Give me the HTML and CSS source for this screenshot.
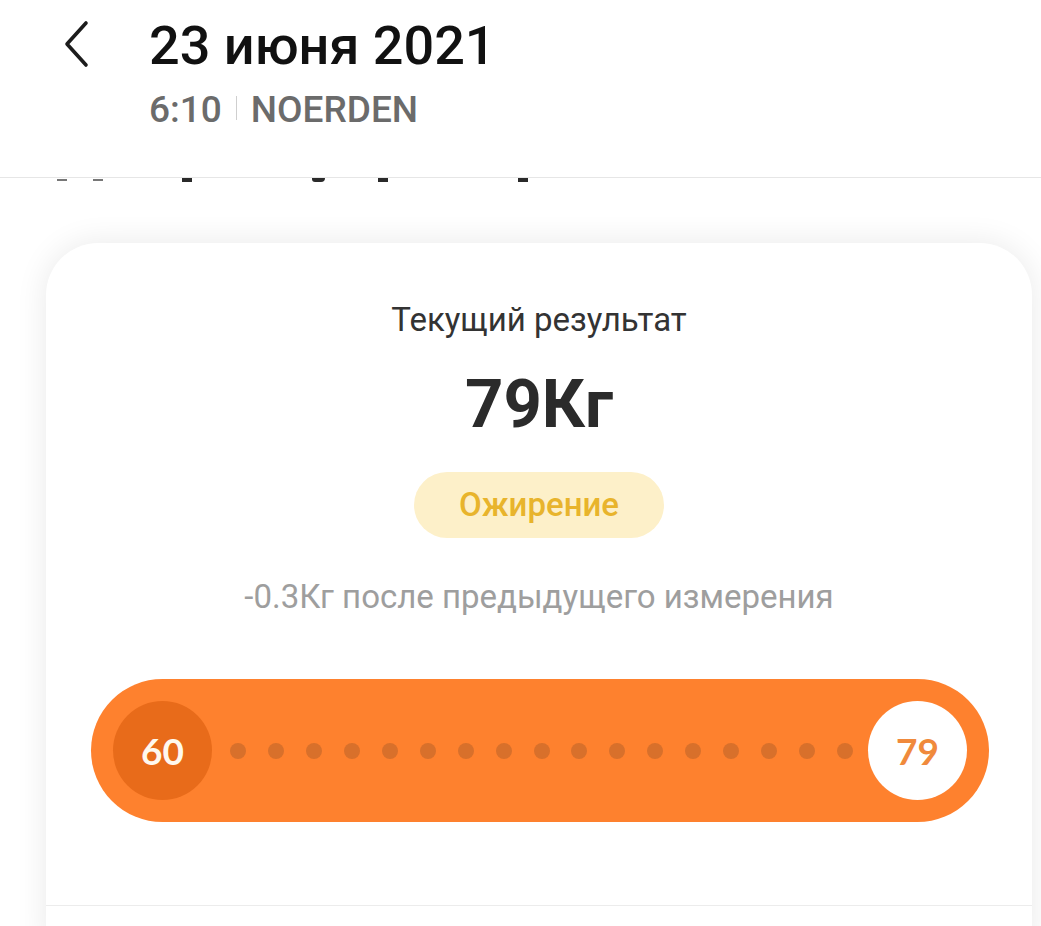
FILE: index.html
```html
<!DOCTYPE html>
<html lang="ru">
<head>
    <meta charset="UTF-8">
    <meta name="viewport" content="width=device-width, initial-scale=1.0">
    <title>23 июня 2021</title>
    <link rel="stylesheet" href="styles.css">
</head>
<body>
    <header class="top-bar">
        <button class="back-btn" aria-label="Назад">
            <svg width="26" height="48" viewBox="0 0 26 48">
                <path d="M22 3 L3 24 L22 45" fill="none" stroke="#1c1c1c" stroke-width="3.6" stroke-linecap="round" stroke-linejoin="round"/>
            </svg>
        </button>
        <div class="title-block">
            <h1 class="title">23 июня 2021</h1>
            <div class="subtitle">
                <span>6:10</span>
                <span class="divider"></span>
                <span>NOERDEN</span>
            </div>
        </div>
    </header>

    <!-- bottoms of the scrolled heading showing under the bar -->
    <div class="peek">
        <span class="frag light f1"></span>
        <span class="frag light f2"></span>
        <span class="frag f3"></span>
        <span class="frag round f4"></span>
        <span class="frag f5"></span>
        <span class="frag f6"></span>
    </div>

    <main class="card">
        <div class="result">
            <p class="result-label">Текущий результат</p>
            <p class="result-value">79Кг</p>
            <span class="badge">Ожирение</span>
            <p class="result-diff">-0.3Кг после предыдущего измерения</p>
        </div>

        <div class="scale">
            <div class="scale-start">60</div>
            <div class="scale-dots">
                <span class="dot"></span><span class="dot"></span><span class="dot"></span>
                <span class="dot"></span><span class="dot"></span><span class="dot"></span>
                <span class="dot"></span><span class="dot"></span><span class="dot"></span>
                <span class="dot"></span><span class="dot"></span><span class="dot"></span>
                <span class="dot"></span><span class="dot"></span><span class="dot"></span>
                <span class="dot"></span><span class="dot"></span>
            </div>
            <div class="scale-end">79</div>
        </div>

        <div class="card-footer"></div>
    </main>
</body>
</html>
```

FILE: styles.css
```css
body {
    margin: 0;
    background: #ffffff;
    font-family: Roboto, "Noto Sans", Arial, sans-serif;
    overflow: hidden;
}

p {
    margin: 0;
}

.top-bar {
    display: flex;
    align-items: flex-start;
    height: 178px;
    box-sizing: border-box;
    padding-left: 64px;
    border-bottom: 1px solid #e6e6e6;
}

.back-btn {
    background: none;
    border: none;
    padding: 0;
    margin-top: 20px;
    width: 26px;
    height: 48px;
    cursor: pointer;
}

.title-block {
    margin-left: 59px;
    padding-top: 14px;
}

.title {
    margin: 0;
    font-size: 54px;
    font-weight: 500;
    line-height: 64px;
    color: #111111;
}

.subtitle {
    display: flex;
    align-items: center;
    margin-top: 10px;
    font-size: 37px;
    font-weight: 500;
    line-height: 43px;
    color: #6b6b6b;
}

.divider {
    width: 1px;
    height: 24px;
    margin: 0 14px 4px;
    background: #cfcfcf;
}

.peek {
    display: flex;
    height: 6px;
}

.frag {
    display: block;
    width: 10px;
    height: 4px;
    background: #2a2a2a;
}

.frag.light {
    height: 2px;
    margin-top: 1px;
    background: #777777;
}

.frag.round {
    width: 13px;
    border-radius: 0 0 8px 6px;
}

.f1 { margin-left: 57px; }
.f2 { margin-left: 26px; }
.f3 { margin-left: 79px; }
.f4 { margin-left: 120px; }
.f5 { margin-left: 53px; }
.f6 { margin-left: 130px; }

.card {
    margin: 59px 9px 0 46px;
    padding-top: 57px;
    background: #ffffff;
    border-radius: 52px 52px 0 0;
    box-shadow: 0 0 32px rgba(0, 0, 0, 0.09);
}

.result {
    display: flex;
    flex-direction: column;
    align-items: center;
    text-align: center;
}

.result-label {
    font-size: 33px;
    line-height: 39px;
    color: #333333;
}

.result-value {
    margin-top: 26px;
    font-size: 67px;
    font-weight: 700;
    line-height: 78px;
    color: #2b2b2b;
}

.badge {
    display: block;
    margin-top: 29px;
    width: 250px;
    height: 66px;
    line-height: 66px;
    border-radius: 33px;
    background: #fdf0c9;
    color: #e8b42c;
    font-size: 33px;
    font-weight: 500;
}

.result-diff {
    margin-top: 39px;
    font-size: 33px;
    line-height: 39px;
    color: #9e9e9e;
}

.scale {
    display: flex;
    align-items: center;
    margin: 63px 43px 0 45px;
    height: 143px;
    padding: 0 22px;
    border-radius: 72px;
    background: #fe812e;
    font-family: Lato, "Open Sans", sans-serif;
    font-weight: 700;
    font-size: 37px;
}

.scale-start,
.scale-end {
    flex: none;
    width: 99px;
    height: 99px;
    border-radius: 50%;
    display: flex;
    align-items: center;
    justify-content: center;
}

.scale-start {
    background: #e86b1a;
    color: #fff8ee;
}

.scale-end {
    background: #ffffff;
    color: #f08a3c;
}

.scale-dots {
    flex: 1;
    display: flex;
    justify-content: space-between;
    margin: 0 15px 0 18px;
}

.dot {
    width: 16px;
    height: 16px;
    border-radius: 50%;
    background: #d8702b;
}

.card-footer {
    margin-top: 83px;
    height: 40px;
    border-top: 1px solid #ececec;
}
```
